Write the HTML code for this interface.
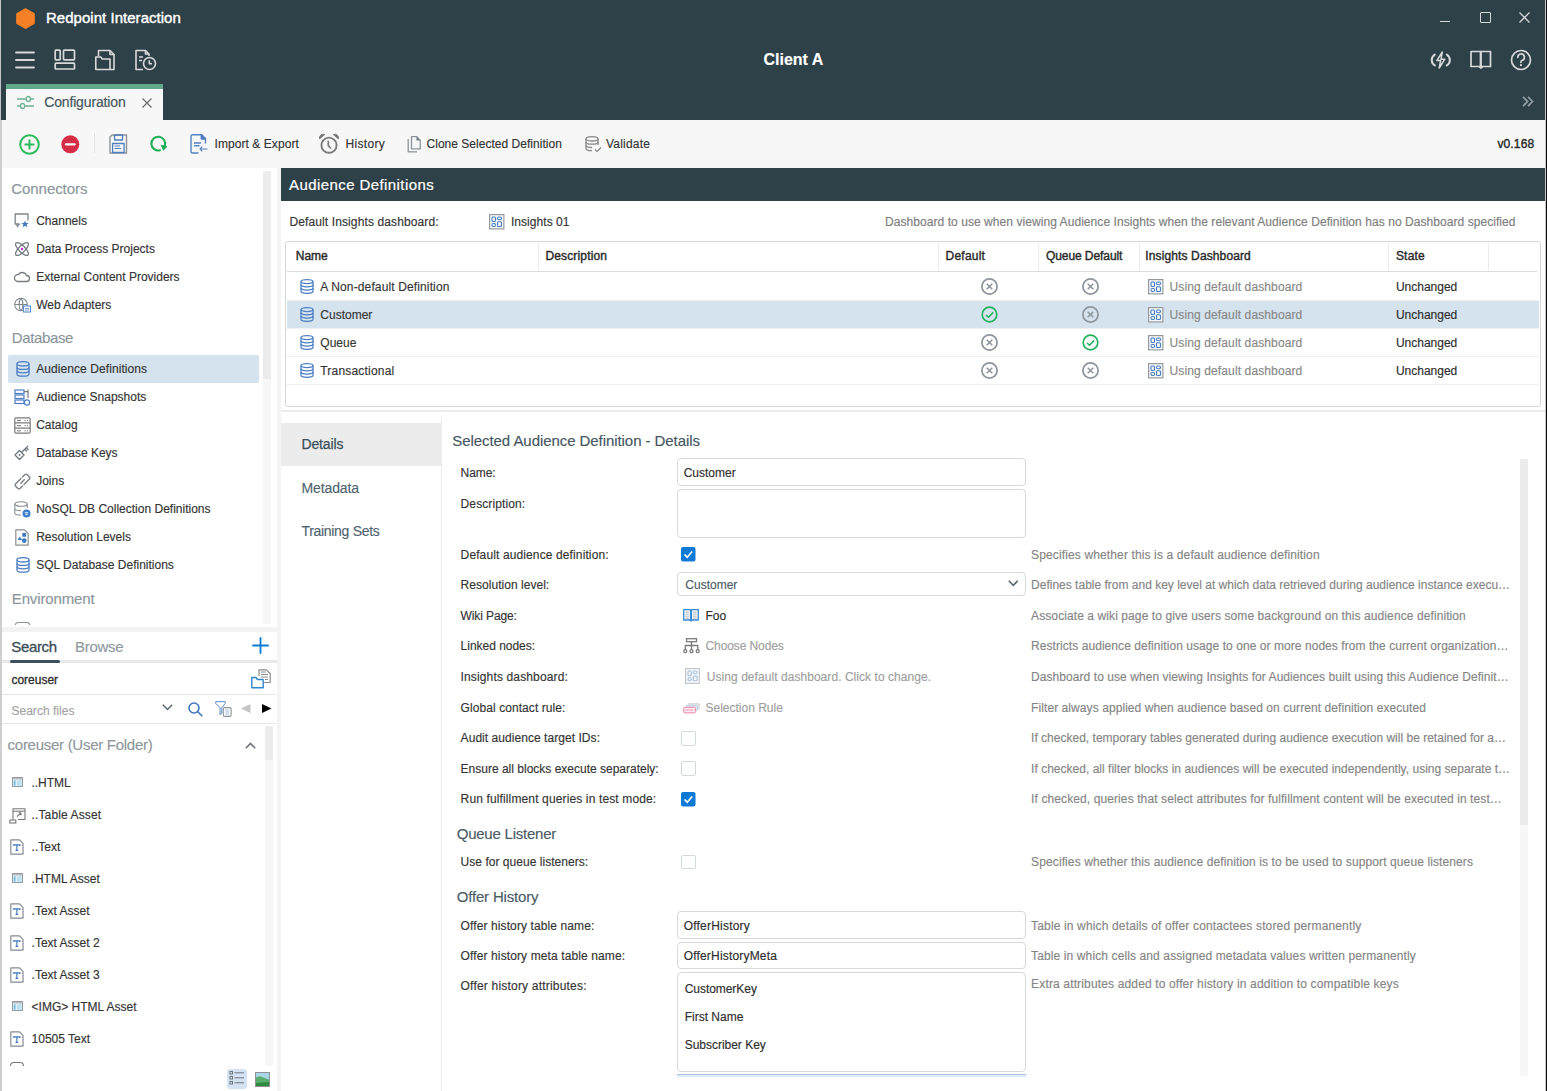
<!DOCTYPE html>
<html><head><meta charset="utf-8">
<style>
*{box-sizing:border-box;margin:0;padding:0}
html,body{width:1547px;height:1091px;overflow:hidden;background:#fff;font-family:"Liberation Sans",sans-serif;font-size:12px;color:#343434}
.a{position:absolute}
.t{position:absolute;white-space:nowrap;line-height:1;-webkit-text-stroke:0.15px currentColor}
svg{position:absolute;overflow:visible}
#frameL{left:0;top:0;width:1px;height:120px;background:#c4c7c8}
#hdr{left:1px;top:0;width:1544px;height:120px;background:#2e4048}
#frameR{left:1545px;top:0;width:1px;height:1091px;background:#c7c7c7}
#frameR2{left:1546px;top:0;width:1px;height:1091px;background:#0a0a0a}
#frameL2{left:0;top:120px;width:2px;height:971px;background:#cfcfcf}
.w{color:#fff}
.ic{fill:none;stroke:#d7d9da;stroke-width:1.6}
</style></head><body>
<div id="hdr" class="a"></div>
<div id="frameL" class="a"></div>
<div id="frameL2" class="a"></div>
<div id="frameR" class="a"></div>
<div id="frameR2" class="a"></div>

<!-- title bar -->
<svg style="left:15.8px;top:8px" width="19" height="21.2" viewBox="0 0 19 21.2"><path d="M9.5 0.6 L18.3 5.6 L18.3 15.6 L9.5 20.6 L0.7 15.6 L0.7 5.6 Z" fill="#f58025" stroke="#f58025" stroke-width="1" stroke-linejoin="round"/></svg>
<div class="t w" style="left:46px;top:9.8px;font-size:15px;letter-spacing:0.03px;-webkit-text-stroke:0.4px #fff">Redpoint Interaction</div>
<!-- window controls -->
<div class="a" style="left:1440px;top:21px;width:10px;height:1.3px;background:#d5d8d9"></div>
<div class="a" style="left:1480px;top:12px;width:10.5px;height:10.5px;border:1.3px solid #d5d8d9;border-radius:1px"></div>
<svg style="left:1519px;top:12px" width="11" height="11" viewBox="0 0 11 11"><path d="M0.5 0.5 L10.5 10.5 M10.5 0.5 L0.5 10.5" stroke="#d5d8d9" stroke-width="1.3"/></svg>

<!-- nav row -->
<svg style="left:15px;top:50px" width="20" height="20" viewBox="0 0 20 20"><path d="M1 2.5H19M1 10H19M1 17.5H19" stroke="#d7d9da" stroke-width="1.8" stroke-linecap="round"/></svg>
<svg style="left:54px;top:49px" width="22" height="22" viewBox="0 0 22 22"><g fill="none" stroke="#d7d9da" stroke-width="1.7"><rect x="1.2" y="1.2" width="5" height="9.6" rx="0.8"/><rect x="9.5" y="1.2" width="11" height="9.6" rx="0.8"/><rect x="1.2" y="14.2" width="19.3" height="5.8" rx="0.8"/></g></svg>
<svg style="left:95px;top:49px" width="21" height="22" viewBox="0 0 21 22"><g fill="none" stroke="#d7d9da" stroke-width="1.6" stroke-linejoin="round"><path d="M3.5 7V1.5H15L19 5.5V20.5H15"/><path d="M15 1.5V5.5H19"/><path d="M0.8 8H6L7 10H15V20.5H0.8Z"/></g></svg>
<svg style="left:135px;top:49px" width="22" height="22" viewBox="0 0 22 22"><g fill="none" stroke="#d7d9da" stroke-width="1.6" stroke-linejoin="round"><path d="M8 20.5H1V1.5H10.5L14 5V7"/><path d="M10.5 1.5V5H14" /><path d="M4 8H8M4 11.5H7"/><circle cx="14.5" cy="14.5" r="6"/><path d="M14.3 11.2V14.8H17"/></g></svg>
<div class="t w" style="left:763.5px;top:51.7px;font-size:16px;font-weight:700">Client A</div>
<!-- right icons -->
<svg style="left:1430px;top:51px" width="22" height="18" viewBox="0 0 22 18"><g fill="none" stroke="#d7d9da" stroke-linecap="round" stroke-linejoin="round"><path d="M4.8 3.6A6.3 6.3 0 0 0 4.8 14.4" stroke-width="2"/><path d="M16.8 3.6A6.3 6.3 0 0 1 16.8 14.4" stroke-width="2"/><path d="M12.3 1L6.8 9.6H10.6L9.2 17L14.8 8.2H11Z" stroke-width="1.5"/></g></svg>
<svg style="left:1470px;top:50px" width="22" height="19" viewBox="0 0 22 19"><g fill="none" stroke="#d7d9da" stroke-width="1.7" stroke-linejoin="round"><path d="M1 1.5H10.5V16.5H1Z"/><path d="M11 1.5H20.5V16.5H11Z"/><path d="M9.5 16.8L11 18L12.5 16.8" /></g></svg>
<svg style="left:1510px;top:49px" width="22" height="22" viewBox="0 0 22 22"><g fill="none" stroke="#d7d9da" stroke-width="1.7"><circle cx="11" cy="11" r="9.5"/><path d="M7.8 8.3A3.3 3.3 0 1 1 11.8 11.5C11 11.8 10.9 12.3 10.9 13.3" stroke-linecap="round"/></g><circle cx="10.9" cy="16.2" r="1.1" fill="#d7d9da"/></svg>

<!-- tab bar -->
<div class="a" style="left:6px;top:84px;width:157px;height:36px;background:#f7f7f7;border-top:5px solid #60a888"></div>
<svg style="left:17px;top:95px" width="17" height="15" viewBox="0 0 17 15"><g fill="none" stroke="#6db394" stroke-width="1.4"><path d="M0 4H9M13.5 4H17M0 11H3.5M8 11H17"/><rect x="9.3" y="1.5" width="4" height="5" rx="2"/><rect x="3.6" y="8.5" width="4" height="5" rx="2"/></g></svg>
<div class="t" style="left:44.2px;top:95px;font-size:14px;color:#465860;letter-spacing:-0.15px;-webkit-text-stroke:0.2px #465860">Configuration</div>
<svg style="left:142px;top:98px" width="10" height="10" viewBox="0 0 10 10"><path d="M0.5 0.5L9.5 9.5M9.5 0.5L0.5 9.5" stroke="#6d6d6d" stroke-width="1.2"/></svg>
<svg style="left:1522px;top:96px" width="12" height="11" viewBox="0 0 12 11"><path d="M1 0.8L5.5 5.5L1 10.2M6 0.8L10.5 5.5L6 10.2" fill="none" stroke="#929ea4" stroke-width="1.7"/></svg>

<!-- toolbar -->
<div class="a" style="left:2px;top:120px;width:1543px;height:47.5px;background:#f7f7f7"></div>
<svg style="left:19px;top:133.5px" width="21" height="21" viewBox="0 0 21 21"><g fill="none" stroke="#2dbb5d" stroke-width="2"><circle cx="10.5" cy="10.5" r="9.3"/><path d="M10.5 5.5V15.5M5.5 10.5H15.5"/></g></svg>
<svg style="left:60.5px;top:134.5px" width="19" height="19" viewBox="0 0 19 19"><circle cx="9.3" cy="9.3" r="9" fill="#d52d45"/><path d="M5 9.3H13.6" stroke="#fff" stroke-width="2.3" stroke-linecap="round"/></svg>
<div class="a" style="left:94px;top:133px;width:1px;height:20px;background:#e3e3e3"></div>
<svg style="left:109px;top:133.5px" width="19" height="20" viewBox="0 0 19 20"><g fill="none" stroke-linejoin="round"><path d="M3 1H17.5V19H1V3Z" stroke="#8f9396" stroke-width="1.4"/><rect x="5.5" y="1" width="8" height="5" stroke="#4e7fc0" stroke-width="1.3"/><rect x="3.6" y="9.5" width="11.5" height="9" stroke="#4e7fc0" stroke-width="1.3"/><path d="M5.5 12H11M5.5 14.5H12" stroke="#4e7fc0" stroke-width="1"/></g></svg>
<svg style="left:150px;top:135px" width="18" height="18" viewBox="0 0 18 18"><path d="M10 15.3A6.9 6.9 0 1 1 14.8 10.8" fill="none" stroke="#1fae55" stroke-width="2.1" stroke-linecap="round"/><path d="M11.2 10.2L17 11.6L13.4 15.2Z" fill="#1fae55" stroke="#1fae55" stroke-width="0.8" stroke-linejoin="round"/></svg>
<svg style="left:189.5px;top:133.5px" width="18" height="20" viewBox="0 0 18 20"><g fill="none" stroke="#5583c3" stroke-width="1.4" stroke-linejoin="round"><path d="M15.5 9.5V4.5L11.8 0.8H2.8Q1 0.8 1 2.6V17.2Q1 19 2.8 19H8.5"/><path d="M4 9H11M4 11.8H9.5"/><path d="M17.5 15H10M12.3 12.7L10 15L12.3 17.3" stroke-width="1.1"/></g><path d="M11 0.8V5.3H15.5Z" fill="#4a7bc0" stroke="#4a7bc0" stroke-width="0.8" stroke-linejoin="round"/></svg>
<div class="t" style="left:214.6px;top:138.1px;letter-spacing:0.059px">Import &amp; Export</div>
<svg style="left:319px;top:133.5px" width="21" height="20" viewBox="0 0 21 20"><g fill="none" stroke="#7a7a7a" stroke-width="1.9"><circle cx="10" cy="11.2" r="7.6"/><path d="M9.3 6.8V11.6L12 14.5" stroke-width="1.7"/></g><path d="M0.6 4.8A3.6 3.6 0 0 1 5.6 0.6L3.2 2.8Z M19.4 4.8A3.6 3.6 0 0 0 14.4 0.6L16.8 2.8Z" fill="#7a7a7a" stroke="#7a7a7a" stroke-width="1"/></svg>
<div class="t" style="left:345.5px;top:138.1px;letter-spacing:0.326px">History</div>
<svg style="left:407px;top:135.5px" width="14" height="17" viewBox="0 0 14 17"><g fill="none" stroke="#8a949a" stroke-width="1.3" stroke-linejoin="round"><path d="M4.5 0.7H9.8L13.2 4.1V12.8H4.5Z"/><path d="M1.2 3V15.8H10"/></g><path d="M9.5 0.7V4.4H13.2Z" fill="#6c7a82"/></svg>
<div class="t" style="left:426.5px;top:138.1px;letter-spacing:0.023px">Clone Selected Definition</div>
<svg style="left:584.5px;top:135.5px" width="17" height="17" viewBox="0 0 17 17"><g fill="none" stroke="#888" stroke-width="1.3"><ellipse cx="7" cy="2.8" rx="6" ry="2.2"/><path d="M1 2.8V12.5C1 13.7 3.7 14.7 7 14.7M13 2.8V9"/><path d="M1 6C1 7.2 3.7 8.2 7 8.2S13 7.2 13 6M1 9.3C1 10.5 3.7 11.5 7 11.5"/><path d="M10 13.5L12 15.5L16 11.5" stroke-width="1.2"/></g></svg>
<div class="t" style="left:605.9px;top:138.1px;letter-spacing:0.231px">Validate</div>
<div class="t" style="left:1497.4px;top:138.2px;color:#2a2a2a;-webkit-text-stroke:0.4px #2a2a2a;letter-spacing:0.154px">v0.168</div>


<!-- LEFT PANEL -->
<div class="a" style="left:2px;top:167.5px;width:275px;height:924px;background:#fff"></div>
<div class="a" style="left:277px;top:167.5px;width:4px;height:924px;background:#f4f4f4"></div>
<!-- nav scrollbar -->
<div class="a" style="left:263px;top:171px;width:8px;height:452.5px;background:#f7f7f7"></div>
<div class="a" style="left:263px;top:171px;width:8px;height:208px;background:#ececec"></div>
<div class="t" style="left:11.3px;top:181.4px;font-size:15px;color:#8b969c;letter-spacing:-0.069px">Connectors</div>
<div class="t" style="left:11.8px;top:330.2px;font-size:15px;color:#8b969c;letter-spacing:-0.374px">Database</div>
<div class="t" style="left:11.8px;top:591px;font-size:15px;color:#8b969c;letter-spacing:-0.142px">Environment</div>
<div class="a" style="left:8px;top:355px;width:250.5px;height:28px;background:#d5e3ee;border-radius:2px"></div>
<svg style="left:14px;top:213px" width="16" height="15" viewBox="0 0 16 15"><path d="M5.5 11H1.2V1H14V7.5" fill="none" stroke="#7c868c" stroke-width="1.3" stroke-linejoin="round"/><path d="M2.5 11L3.5 13.5L5.5 11" fill="none" stroke="#7c868c" stroke-width="1.2"/><path d="M11 7.5L12 10H14.8L12.6 11.6L13.4 14.3L11 12.7L8.6 14.3L9.4 11.6L7.2 10H10Z" fill="#3f78c0"/></svg>
<div class="t" style="left:36.2px;top:214.84px">Channels</div>
<svg style="left:14px;top:241px" width="16" height="16" viewBox="0 0 16 16"><g fill="none" stroke="#737d83" stroke-width="1.3"><ellipse cx="8" cy="8" rx="8.5" ry="3.2" transform="rotate(45 8 8)"/><ellipse cx="8" cy="8" rx="8.5" ry="3.2" transform="rotate(-45 8 8)"/></g><circle cx="8" cy="8" r="1.2" fill="#c020c0"/></svg>
<div class="t" style="left:36.2px;top:242.84px">Data Process Projects</div>
<svg style="left:14px;top:271px" width="16" height="12" viewBox="0 0 16 12"><path d="M3.5 10.5H12.5A3 3 0 0 0 12.5 4.5A4.5 4.5 0 0 0 4.5 3.5A3.5 3.5 0 0 0 3.5 10.5Z" fill="none" stroke="#737d83" stroke-width="1.3"/></svg>
<div class="t" style="left:36.2px;top:270.84px">External Content Providers</div>
<svg style="left:14px;top:297px" width="17" height="16" viewBox="0 0 17 16"><g fill="none" stroke="#7c868c" stroke-width="1.1"><circle cx="7" cy="7.5" r="6.3"/><path d="M0.7 7.5H13.3M7 1.2C4.5 4 4.5 11 7 13.8M7 1.2C9.5 4 9.5 11 7 13.8"/></g><rect x="9.5" y="9" width="7" height="6" fill="#fff" stroke="#5a8ccc" stroke-width="1.1"/><path d="M11 11.5H15M11 13H15" stroke="#5a8ccc" stroke-width="0.8"/></svg>
<div class="t" style="left:36.2px;top:298.84px">Web Adapters</div>
<svg style="left:15.5px;top:361px" width="14" height="16" viewBox="0 0 14 16"><g fill="none" stroke="#4a7fc4" stroke-width="1.3"><ellipse cx="7" cy="2.8" rx="6" ry="2.2"/><path d="M1 2.8V13C1 14.2 3.7 15.2 7 15.2S13 14.2 13 13V2.8"/><path d="M1 6.2C1 7.4 3.7 8.4 7 8.4S13 7.4 13 6.2M1 9.6C1 10.8 3.7 11.8 7 11.8S13 10.8 13 9.6"/></g></svg>
<div class="t" style="left:36.2px;top:362.84px;letter-spacing:0.08px">Audience Definitions</div>
<svg style="left:14px;top:388.5px" width="16" height="17" viewBox="0 0 16 17"><g fill="none" stroke-width="1.2"><rect x="1" y="1" width="9" height="3.5" stroke="#4a7fc4"/><rect x="1" y="6" width="9" height="3.5" stroke="#4a7fc4"/><rect x="1" y="11" width="9" height="3.5" stroke="#4a7fc4"/><path d="M10 2.7H14M14 0.5V9" stroke="#777"/><circle cx="13" cy="13.5" r="2.6" stroke="#4a7fc4" fill="#fff"/></g></svg>
<div class="t" style="left:36.2px;top:390.84px">Audience Snapshots</div>
<svg style="left:13.5px;top:416.5px" width="17" height="17" viewBox="0 0 17 17"><g fill="none" stroke="#7a7a7a" stroke-width="1.2"><rect x="0.8" y="0.8" width="15.4" height="15.4" rx="1.2"/><path d="M0.8 5.9H16.2M0.8 11.1H16.2"/></g><g fill="#8a8a8a"><rect x="3" y="2.8" width="4" height="1.2"/><rect x="3" y="8" width="4" height="1.2"/><rect x="3" y="13.2" width="4" height="1.2"/><rect x="10.5" y="2.8" width="1.2" height="1.2"/><rect x="12.8" y="2.8" width="1.2" height="1.2"/><rect x="10.5" y="8" width="1.2" height="1.2"/><rect x="12.8" y="8" width="1.2" height="1.2"/><rect x="10.5" y="13.2" width="1.2" height="1.2"/><rect x="12.8" y="13.2" width="1.2" height="1.2"/></g></svg>
<div class="t" style="left:36.2px;top:418.84px">Catalog</div>
<svg style="left:14px;top:445px" width="16" height="16" viewBox="0 0 16 16"><g fill="none" stroke="#6f7a80" stroke-width="1.4" stroke-linejoin="round"><path d="M1 10L5.5 5.5L10 10L5.5 14.5Z"/><path d="M7.5 7.5L14 1M11 4.5L13 6.5M12.5 3L14.5 5"/></g><circle cx="5.5" cy="10" r="1" fill="#6f7a80"/></svg>
<div class="t" style="left:36.2px;top:446.84px">Database Keys</div>
<svg style="left:13.5px;top:472.5px" width="17" height="17" viewBox="0 0 17 17"><g fill="none" stroke="#7d858a" stroke-width="1.5" stroke-linecap="round" stroke-linejoin="round"><path d="M8.5 4L11 1.5Q12 0.8 13 1.5L15.5 4Q16.2 5 15.5 6L10 11.5"/><path d="M8.5 13L6 15.5Q5 16.2 4 15.5L1.5 13Q0.8 12 1.5 11L7 5.5"/><path d="M6.8 10.2L10.2 6.8"/></g></svg>
<div class="t" style="left:36.2px;top:474.84px">Joins</div>
<svg style="left:14px;top:500.5px" width="17" height="17" viewBox="0 0 17 17"><g fill="none" stroke="#8a8f93" stroke-width="1.1"><ellipse cx="7" cy="3" rx="6.2" ry="2.3"/><path d="M0.8 3V12C0.8 13.2 3.5 14.2 7 14.2M13.2 3V7M0.8 7.5C0.8 8.7 3.5 9.7 7 9.7"/></g><circle cx="12.5" cy="12.5" r="4" fill="#3b7fd0"/><path d="M10.8 11.8H14.2M11.5 13.5H13.5" stroke="#fff" stroke-width="1"/></svg>
<div class="t" style="left:36.2px;top:502.84px">NoSQL DB Collection Definitions</div>
<svg style="left:15px;top:528.5px" width="14" height="17" viewBox="0 0 14 17"><path d="M0.8 0.8H9.5L13.2 4.5V16.2H0.8Z" fill="none" stroke="#8a9095" stroke-width="1.2" stroke-linejoin="round"/><path d="M2.5 11L4.8 7.4L7.1 11Z" fill="#3f78c0"/><rect x="7.3" y="4" width="3.8" height="3.8" rx="0.5" fill="#3f78c0"/><circle cx="9.2" cy="11.6" r="2.4" fill="#3f78c0"/></svg>
<div class="t" style="left:36.2px;top:530.84px">Resolution Levels</div>
<svg style="left:15.5px;top:557px" width="14" height="16" viewBox="0 0 14 16"><g fill="none" stroke="#4a7fc4" stroke-width="1.3"><ellipse cx="7" cy="2.8" rx="6" ry="2.2"/><path d="M1 2.8V13C1 14.2 3.7 15.2 7 15.2S13 14.2 13 13V2.8"/><path d="M1 6.2C1 7.4 3.7 8.4 7 8.4S13 7.4 13 6.2M1 9.6C1 10.8 3.7 11.8 7 11.8S13 10.8 13 9.6"/></g></svg>
<div class="t" style="left:36.2px;top:558.84px">SQL Database Definitions</div>

<!-- partial icon -->
<div class="a" style="left:14.5px;top:622.2px;width:15px;height:3px;border:1.2px solid #8a9398;border-bottom:none;border-radius:3px 3px 0 0"></div>
<!-- separator -->
<div class="a" style="left:2px;top:627px;width:275px;height:5px;background:#f3f3f3"></div>
<div class="t" style="left:11.3px;top:638.7px;font-size:15px;color:#3a4d58;-webkit-text-stroke:0.3px #3a4d58;letter-spacing:-0.346px">Search</div>
<div class="t" style="left:75px;top:638.7px;font-size:15px;color:#8e99a0;letter-spacing:-0.306px">Browse</div>
<svg style="left:252px;top:636.5px" width="17" height="17" viewBox="0 0 17 17"><path d="M8.5 1V16M1 8.5H16" stroke="#0b7bd5" stroke-width="1.8" stroke-linecap="round"/></svg>
<div class="a" style="left:2px;top:660px;width:275px;height:3px;background:#e8e8e8"></div>
<div class="a" style="left:10px;top:660px;width:50px;height:3px;background:#3b4f5c;border-radius:1.5px"></div>
<div class="t" style="left:11.4px;top:673.5px;color:#2d2d2d;-webkit-text-stroke:0.3px #2d2d2d;letter-spacing:0.002px">coreuser</div>
<svg style="left:250.5px;top:669px" width="20" height="20" viewBox="0 0 20 20"><g fill="none" stroke-linejoin="round"><path d="M8 7V0.8H15.5L19.2 4.5V13.5H13" stroke="#8c8c8c" stroke-width="1.2"/><path d="M10 3H15M10 5.5H17M10 8H17M14 10.5H17" stroke="#8c8c8c" stroke-width="1"/><path d="M0.8 8.5H5L6.5 10.5H12.2V18.8H0.8Z" stroke="#2f86cf" stroke-width="1.4"/></g></svg>
<div class="a" style="left:2px;top:694px;width:274px;height:1px;background:#e6e6e6"></div>
<div class="t" style="left:11.4px;top:704.5px;color:#a3a3a3;letter-spacing:0.036px">Search files</div>
<svg style="left:162px;top:704px" width="11" height="7" viewBox="0 0 11 7"><path d="M0.8 0.8L5.5 5.5L10.2 0.8" fill="none" stroke="#5a6a72" stroke-width="1.5"/></svg>
<svg style="left:187.5px;top:701.5px" width="15" height="15" viewBox="0 0 15 15"><g fill="none" stroke="#3f78be" stroke-width="1.6"><circle cx="6" cy="6" r="5"/><path d="M9.5 9.5L14.3 14.3"/></g></svg>
<svg style="left:214.5px;top:701px" width="17" height="16" viewBox="0 0 17 16"><path d="M0.7 0.7H10.3V2.3L6.8 6.8V12.2L5 13.8V6.8L0.7 2.3Z" fill="none" stroke="#5b8cc8" stroke-width="1" stroke-linejoin="round"/><rect x="8.3" y="6.6" width="7.8" height="8.8" rx="1.2" fill="#fff" stroke="#8c959b" stroke-width="1.1"/><path d="M10.2 9H14.2M10.2 11H14.2M10.2 13H14.2" stroke="#7ea3d3" stroke-width="0.7"/></svg>
<svg style="left:241px;top:704px" width="10" height="9" viewBox="0 0 10 9"><path d="M9.5 0V9L0 4.5Z" fill="#c4c4c4"/></svg>
<svg style="left:261.5px;top:704px" width="10" height="9" viewBox="0 0 10 9"><path d="M0 0V9L9.5 4.5Z" fill="#000"/></svg>
<div class="a" style="left:2px;top:723px;width:274px;height:1px;background:#e6e6e6"></div>
<!-- folder scrollbar -->
<div class="a" style="left:265px;top:726px;width:8px;height:340px;background:#f7f7f7"></div>
<div class="a" style="left:265px;top:726px;width:8px;height:34px;background:#ececec"></div>
<div class="t" style="left:7.6px;top:737.3px;font-size:15px;color:#8e979c;letter-spacing:-0.275px">coreuser (User Folder)</div>
<svg style="left:245px;top:742px" width="11" height="7" viewBox="0 0 11 7"><path d="M0.8 6.2L5.5 1.5L10.2 6.2" fill="none" stroke="#6d767b" stroke-width="1.6"/></svg>
<svg style="left:12px;top:777px" width="11" height="10" viewBox="0 0 11 10"><rect x="0.5" y="0.5" width="10" height="9" fill="#fff" stroke="#979da1" stroke-width="1"/><rect x="1" y="1" width="9" height="1.5" fill="#b3b8bc"/><rect x="1.6" y="3.3" width="2" height="5.4" fill="#6fbbe6"/><path d="M4.6 4H9.8M4.6 6H9.8M4.6 8H9.8" stroke="#6fbbe6" stroke-width="0.9"/></svg>
<div class="t" style="left:31.6px;top:776.84px;letter-spacing:-0.069px">..HTML</div>
<svg style="left:9px;top:808px" width="17" height="16" viewBox="0 0 17 16"><g fill="none" stroke="#7a7a7a" stroke-width="1.1"><path d="M4 11.5V0.8H16V11.5H9"/><path d="M4 3.2H16"/><path d="M8 8.5L12 4.8M12 4.8H9.5M12 4.8V7.2"/><rect x="0.8" y="12" width="6" height="3"/></g></svg>
<div class="t" style="left:31.6px;top:808.84px;letter-spacing:0.121px">..Table Asset</div>
<svg style="left:10px;top:839px" width="14" height="16" viewBox="0 0 14 16"><path d="M0.8 0.8H9.5L13 4.3V15.2H0.8Z" fill="none" stroke="#868c91" stroke-width="1.2" stroke-linejoin="round"/><path d="M3.8 7V5.8H9.9V7M6.85 5.8V11.3M5.5 11.3H8.2" fill="none" stroke="#3f78c0" stroke-width="1.15"/></svg>
<div class="t" style="left:31.6px;top:840.84px">..Text</div>
<svg style="left:12px;top:873px" width="11" height="10" viewBox="0 0 11 10"><rect x="0.5" y="0.5" width="10" height="9" fill="#fff" stroke="#979da1" stroke-width="1"/><rect x="1" y="1" width="9" height="1.5" fill="#b3b8bc"/><rect x="1.6" y="3.3" width="2" height="5.4" fill="#6fbbe6"/><path d="M4.6 4H9.8M4.6 6H9.8M4.6 8H9.8" stroke="#6fbbe6" stroke-width="0.9"/></svg>
<div class="t" style="left:31.6px;top:872.84px">.HTML Asset</div>
<svg style="left:10px;top:903px" width="14" height="16" viewBox="0 0 14 16"><path d="M0.8 0.8H9.5L13 4.3V15.2H0.8Z" fill="none" stroke="#868c91" stroke-width="1.2" stroke-linejoin="round"/><path d="M3.8 7V5.8H9.9V7M6.85 5.8V11.3M5.5 11.3H8.2" fill="none" stroke="#3f78c0" stroke-width="1.15"/></svg>
<div class="t" style="left:31.6px;top:904.84px">.Text Asset</div>
<svg style="left:10px;top:935px" width="14" height="16" viewBox="0 0 14 16"><path d="M0.8 0.8H9.5L13 4.3V15.2H0.8Z" fill="none" stroke="#868c91" stroke-width="1.2" stroke-linejoin="round"/><path d="M3.8 7V5.8H9.9V7M6.85 5.8V11.3M5.5 11.3H8.2" fill="none" stroke="#3f78c0" stroke-width="1.15"/></svg>
<div class="t" style="left:31.6px;top:936.84px">.Text Asset 2</div>
<svg style="left:10px;top:967px" width="14" height="16" viewBox="0 0 14 16"><path d="M0.8 0.8H9.5L13 4.3V15.2H0.8Z" fill="none" stroke="#868c91" stroke-width="1.2" stroke-linejoin="round"/><path d="M3.8 7V5.8H9.9V7M6.85 5.8V11.3M5.5 11.3H8.2" fill="none" stroke="#3f78c0" stroke-width="1.15"/></svg>
<div class="t" style="left:31.6px;top:968.84px">.Text Asset 3</div>
<svg style="left:12px;top:1001px" width="11" height="10" viewBox="0 0 11 10"><rect x="0.5" y="0.5" width="10" height="9" fill="#fff" stroke="#979da1" stroke-width="1"/><rect x="1" y="1" width="9" height="1.5" fill="#b3b8bc"/><rect x="1.6" y="3.3" width="2" height="5.4" fill="#6fbbe6"/><path d="M4.6 4H9.8M4.6 6H9.8M4.6 8H9.8" stroke="#6fbbe6" stroke-width="0.9"/></svg>
<div class="t" style="left:31.6px;top:1000.84px">&lt;IMG&gt; HTML Asset</div>
<svg style="left:10px;top:1031px" width="14" height="16" viewBox="0 0 14 16"><path d="M0.8 0.8H9.5L13 4.3V15.2H0.8Z" fill="none" stroke="#868c91" stroke-width="1.2" stroke-linejoin="round"/><path d="M3.8 7V5.8H9.9V7M6.85 5.8V11.3M5.5 11.3H8.2" fill="none" stroke="#3f78c0" stroke-width="1.15"/></svg>
<div class="t" style="left:31.6px;top:1032.84px">10505 Text</div>

<!-- bottom partial icon -->
<div class="a" style="left:9.5px;top:1062px;width:14px;height:4px;border:1.2px solid #777;border-bottom:none;border-radius:7px 7px 0 0"></div>
<div class="a" style="left:2px;top:1065.5px;width:263px;height:26px;background:#fff"></div>
<div class="a" style="left:227px;top:1069px;width:20px;height:20px;background:#d3e3f3;border-radius:3px"></div>
<svg style="left:229px;top:1070px" width="16" height="16" viewBox="0 0 16 16"><g fill="none" stroke="#6e7478" stroke-width="1"><rect x="1" y="1.5" width="2.5" height="2.5"/><rect x="1" y="6.5" width="2.5" height="2.5"/><rect x="1" y="11.5" width="2.5" height="2.5"/><path d="M5.5 2.8H15M5.5 7.8H15M5.5 12.8H15"/></g></svg>
<svg style="left:255px;top:1071.5px" width="15" height="15" viewBox="0 0 15 15"><rect x="0.5" y="0.5" width="14" height="14" fill="#a9d6e6" stroke="#8e9296" stroke-width="1"/><path d="M1 14V5.5C3.5 4 6 4.2 8.5 5.5S12.5 7.5 14 7.5V14Z" fill="#5aae6c"/><path d="M1 14V11C5 10.5 10 10.5 14 10V14Z" fill="#2f8b3c"/></svg>


<!-- MAIN PANEL -->
<div class="a" style="left:281px;top:167.8px;width:1264px;height:33.3px;background:#2e4048"></div>
<div class="t w" style="left:289.1px;top:177.3px;font-size:15px;letter-spacing:0.412px;-webkit-text-stroke:0.2px #fff">Audience Definitions</div>
<div class="t" style="left:289.4px;top:216px;letter-spacing:0.119px">Default Insights dashboard:</div>
<svg style="left:489px;top:214px" width="15.5" height="15.5" viewBox="0 0 15.5 15.5"><rect x="0.6" y="0.6" width="14.3" height="14.3" fill="#f3f6f9" stroke="#8e959a" stroke-width="1.1"/><g fill="none" stroke="#4a7fc4" stroke-width="1.1"><rect x="3" y="3" width="3.5" height="4.5" rx="1"/><rect x="8.5" y="3" width="4" height="2.8" rx="1.2"/><rect x="3" y="9.5" width="3.5" height="3" rx="1.2"/><rect x="8.5" y="7.8" width="4" height="4.7" rx="1"/></g></svg>
<div class="t" style="left:510.9px;top:216px;letter-spacing:0.055px">Insights 01</div>
<div class="t" style="left:885px;top:216px;color:#7e7e7e;letter-spacing:0.061px">Dashboard to use when viewing Audience Insights when the relevant Audience Definition has no Dashboard specified</div>

<!-- table -->
<div class="a" style="left:285px;top:241px;width:1255.5px;height:166px;border:1px solid #d6d6d6;border-radius:3px"></div>
<div class="a" style="left:287px;top:270.7px;width:1250px;height:1.6px;background:#dcdcdc"></div>
<div class="a" style="left:538px;top:243px;width:1px;height:28px;background:#ececec"></div>
<div class="a" style="left:938px;top:243px;width:1px;height:28px;background:#ececec"></div>
<div class="a" style="left:1038px;top:243px;width:1px;height:28px;background:#ececec"></div>
<div class="a" style="left:1139px;top:243px;width:1px;height:28px;background:#ececec"></div>
<div class="a" style="left:1387.5px;top:243px;width:1px;height:28px;background:#ececec"></div>
<div class="a" style="left:1488px;top:243px;width:1px;height:28px;background:#ececec"></div>
<div class="t" style="left:295.8px;top:250.4px;color:#2a2a2a;-webkit-text-stroke:0.4px #2a2a2a;letter-spacing:-0.072px">Name</div>
<div class="t" style="left:545.4px;top:250.4px;color:#2a2a2a;-webkit-text-stroke:0.4px #2a2a2a;letter-spacing:0.157px">Description</div>
<div class="t" style="left:945.6px;top:250.4px;color:#2a2a2a;-webkit-text-stroke:0.4px #2a2a2a;letter-spacing:0.211px">Default</div>
<div class="t" style="left:1046px;top:250.4px;color:#2a2a2a;-webkit-text-stroke:0.4px #2a2a2a;letter-spacing:-0.083px">Queue Default</div>
<div class="t" style="left:1145.3px;top:250.4px;color:#2a2a2a;-webkit-text-stroke:0.4px #2a2a2a;letter-spacing:0.123px">Insights Dashboard</div>
<div class="t" style="left:1395.9px;top:250.4px;color:#2a2a2a;-webkit-text-stroke:0.4px #2a2a2a;letter-spacing:0.217px">State</div>
<div class="a" style="left:287px;top:299.6px;width:1252px;height:28.2px;background:#d5e3ee"></div>
<svg style="left:299.5px;top:278.5px" width="14" height="15" viewBox="0 0 14 15"><g fill="none" stroke="#4a7fc4" stroke-width="1.25"><ellipse cx="7" cy="2.6" rx="6" ry="2"/><path d="M1 2.6V12.3C1 13.4 3.7 14.3 7 14.3S13 13.4 13 12.3V2.6"/><path d="M1 5.8C1 6.9 3.7 7.8 7 7.8S13 6.9 13 5.8M1 9C1 10.1 3.7 11 7 11S13 10.1 13 9"/></g></svg>
<div class="t" style="left:320.3px;top:280.64px;letter-spacing:0.131px">A Non-default Definition</div>
<svg style="left:981px;top:277.5px" width="17" height="17" viewBox="0 0 17 17"><circle cx="8.5" cy="8.5" r="7.6" fill="none" stroke="#8e979d" stroke-width="1.75"/><path d="M5.7 5.7L11.3 11.3M11.3 5.7L5.7 11.3" stroke="#8e979d" stroke-width="1.6"/></svg>
<svg style="left:1081.8px;top:277.5px" width="17" height="17" viewBox="0 0 17 17"><circle cx="8.5" cy="8.5" r="7.6" fill="none" stroke="#8e979d" stroke-width="1.75"/><path d="M5.7 5.7L11.3 11.3M11.3 5.7L5.7 11.3" stroke="#8e979d" stroke-width="1.6"/></svg>
<svg style="left:1148px;top:278.5px" width="15.5" height="15.5" viewBox="0 0 15.5 15.5"><rect x="0.6" y="0.6" width="14.3" height="14.3" fill="#f3f6f9" stroke="#8e959a" stroke-width="1.1"/><g fill="none" stroke="#4a7fc4" stroke-width="1.1"><rect x="3" y="3" width="3.5" height="4.5" rx="1"/><rect x="8.5" y="3" width="4" height="2.8" rx="1.2"/><rect x="3" y="9.5" width="3.5" height="3" rx="1.2"/><rect x="8.5" y="7.8" width="4" height="4.7" rx="1"/></g></svg>
<div class="t" style="left:1169.5px;top:280.64px;color:#888;letter-spacing:0.123px">Using default dashboard</div>
<div class="t" style="left:1395.9px;top:280.64px;color:#2d2d2d">Unchanged</div>
<div class="a" style="left:287px;top:299.5px;width:1252px;height:1px;background:#f0f0f0"></div>
<svg style="left:299.5px;top:306.5px" width="14" height="15" viewBox="0 0 14 15"><g fill="none" stroke="#4a7fc4" stroke-width="1.25"><ellipse cx="7" cy="2.6" rx="6" ry="2"/><path d="M1 2.6V12.3C1 13.4 3.7 14.3 7 14.3S13 13.4 13 12.3V2.6"/><path d="M1 5.8C1 6.9 3.7 7.8 7 7.8S13 6.9 13 5.8M1 9C1 10.1 3.7 11 7 11S13 10.1 13 9"/></g></svg>
<div class="t" style="left:320.3px;top:308.64px">Customer</div>
<svg style="left:981px;top:305.5px" width="17" height="17" viewBox="0 0 17 17"><circle cx="8.5" cy="8.5" r="7.3" fill="none" stroke="#22b35e" stroke-width="1.7"/><path d="M5 9L7.5 11.2L12.2 6.4" fill="none" stroke="#22b35e" stroke-width="1.6"/></svg>
<svg style="left:1081.8px;top:305.5px" width="17" height="17" viewBox="0 0 17 17"><circle cx="8.5" cy="8.5" r="7.6" fill="none" stroke="#8e979d" stroke-width="1.75"/><path d="M5.7 5.7L11.3 11.3M11.3 5.7L5.7 11.3" stroke="#8e979d" stroke-width="1.6"/></svg>
<svg style="left:1148px;top:306.5px" width="15.5" height="15.5" viewBox="0 0 15.5 15.5"><rect x="0.6" y="0.6" width="14.3" height="14.3" fill="#f3f6f9" stroke="#8e959a" stroke-width="1.1"/><g fill="none" stroke="#4a7fc4" stroke-width="1.1"><rect x="3" y="3" width="3.5" height="4.5" rx="1"/><rect x="8.5" y="3" width="4" height="2.8" rx="1.2"/><rect x="3" y="9.5" width="3.5" height="3" rx="1.2"/><rect x="8.5" y="7.8" width="4" height="4.7" rx="1"/></g></svg>
<div class="t" style="left:1169.5px;top:308.64px;color:#888;letter-spacing:0.123px">Using default dashboard</div>
<div class="t" style="left:1395.9px;top:308.64px;color:#2d2d2d">Unchanged</div>
<div class="a" style="left:287px;top:327.5px;width:1252px;height:1px;background:#f0f0f0"></div>
<svg style="left:299.5px;top:334.5px" width="14" height="15" viewBox="0 0 14 15"><g fill="none" stroke="#4a7fc4" stroke-width="1.25"><ellipse cx="7" cy="2.6" rx="6" ry="2"/><path d="M1 2.6V12.3C1 13.4 3.7 14.3 7 14.3S13 13.4 13 12.3V2.6"/><path d="M1 5.8C1 6.9 3.7 7.8 7 7.8S13 6.9 13 5.8M1 9C1 10.1 3.7 11 7 11S13 10.1 13 9"/></g></svg>
<div class="t" style="left:320.3px;top:336.64px">Queue</div>
<svg style="left:981px;top:333.5px" width="17" height="17" viewBox="0 0 17 17"><circle cx="8.5" cy="8.5" r="7.6" fill="none" stroke="#8e979d" stroke-width="1.75"/><path d="M5.7 5.7L11.3 11.3M11.3 5.7L5.7 11.3" stroke="#8e979d" stroke-width="1.6"/></svg>
<svg style="left:1081.8px;top:333.5px" width="17" height="17" viewBox="0 0 17 17"><circle cx="8.5" cy="8.5" r="7.3" fill="none" stroke="#22b35e" stroke-width="1.7"/><path d="M5 9L7.5 11.2L12.2 6.4" fill="none" stroke="#22b35e" stroke-width="1.6"/></svg>
<svg style="left:1148px;top:334.5px" width="15.5" height="15.5" viewBox="0 0 15.5 15.5"><rect x="0.6" y="0.6" width="14.3" height="14.3" fill="#f3f6f9" stroke="#8e959a" stroke-width="1.1"/><g fill="none" stroke="#4a7fc4" stroke-width="1.1"><rect x="3" y="3" width="3.5" height="4.5" rx="1"/><rect x="8.5" y="3" width="4" height="2.8" rx="1.2"/><rect x="3" y="9.5" width="3.5" height="3" rx="1.2"/><rect x="8.5" y="7.8" width="4" height="4.7" rx="1"/></g></svg>
<div class="t" style="left:1169.5px;top:336.64px;color:#888;letter-spacing:0.123px">Using default dashboard</div>
<div class="t" style="left:1395.9px;top:336.64px;color:#2d2d2d">Unchanged</div>
<div class="a" style="left:287px;top:355.5px;width:1252px;height:1px;background:#f0f0f0"></div>
<svg style="left:299.5px;top:362.5px" width="14" height="15" viewBox="0 0 14 15"><g fill="none" stroke="#4a7fc4" stroke-width="1.25"><ellipse cx="7" cy="2.6" rx="6" ry="2"/><path d="M1 2.6V12.3C1 13.4 3.7 14.3 7 14.3S13 13.4 13 12.3V2.6"/><path d="M1 5.8C1 6.9 3.7 7.8 7 7.8S13 6.9 13 5.8M1 9C1 10.1 3.7 11 7 11S13 10.1 13 9"/></g></svg>
<div class="t" style="left:320.3px;top:364.64px;letter-spacing:0.192px">Transactional</div>
<svg style="left:981px;top:361.5px" width="17" height="17" viewBox="0 0 17 17"><circle cx="8.5" cy="8.5" r="7.6" fill="none" stroke="#8e979d" stroke-width="1.75"/><path d="M5.7 5.7L11.3 11.3M11.3 5.7L5.7 11.3" stroke="#8e979d" stroke-width="1.6"/></svg>
<svg style="left:1081.8px;top:361.5px" width="17" height="17" viewBox="0 0 17 17"><circle cx="8.5" cy="8.5" r="7.6" fill="none" stroke="#8e979d" stroke-width="1.75"/><path d="M5.7 5.7L11.3 11.3M11.3 5.7L5.7 11.3" stroke="#8e979d" stroke-width="1.6"/></svg>
<svg style="left:1148px;top:362.5px" width="15.5" height="15.5" viewBox="0 0 15.5 15.5"><rect x="0.6" y="0.6" width="14.3" height="14.3" fill="#f3f6f9" stroke="#8e959a" stroke-width="1.1"/><g fill="none" stroke="#4a7fc4" stroke-width="1.1"><rect x="3" y="3" width="3.5" height="4.5" rx="1"/><rect x="8.5" y="3" width="4" height="2.8" rx="1.2"/><rect x="3" y="9.5" width="3.5" height="3" rx="1.2"/><rect x="8.5" y="7.8" width="4" height="4.7" rx="1"/></g></svg>
<div class="t" style="left:1169.5px;top:364.64px;color:#888;letter-spacing:0.123px">Using default dashboard</div>
<div class="t" style="left:1395.9px;top:364.64px;color:#2d2d2d">Unchanged</div>
<div class="a" style="left:287px;top:383.5px;width:1252px;height:1px;background:#f0f0f0"></div>

<!-- separator -->
<div class="a" style="left:281px;top:410px;width:1264px;height:1.5px;background:#ededed"></div>

<!-- details tabs -->
<div class="a" style="left:281px;top:423px;width:160px;height:43px;background:#ececec"></div>
<div class="a" style="left:441px;top:415px;width:1px;height:676px;background:#ececec"></div>
<div class="t" style="left:301.4px;top:437.3px;font-size:14px;color:#3c4f5a;-webkit-text-stroke:0.25px #3c4f5a;letter-spacing:-0.116px">Details</div>
<div class="t" style="left:301.4px;top:480.5px;font-size:14px;color:#4f6470;letter-spacing:-0.096px">Metadata</div>
<div class="t" style="left:301.4px;top:523.8px;font-size:14px;color:#4f6470;letter-spacing:-0.297px">Training Sets</div>

<!-- form scrollbar -->
<div class="a" style="left:1519.5px;top:459px;width:8.5px;height:617px;background:#f7f7f7"></div>
<div class="a" style="left:1519.5px;top:459px;width:8.5px;height:366px;background:#ececec"></div>

<div class="t" style="left:452.3px;top:432.6px;font-size:15px;color:#44565f;letter-spacing:-0.066px">Selected Audience Definition - Details</div>
<div class="t" style="left:460.6px;top:467.14px;color:#343434;letter-spacing:-0.086px">Name:</div>
<div class="a" style="left:677.3px;top:458.3px;width:348.5px;height:28.2px;border:1.2px solid #d8d8d8;border-radius:4px;background:#fff"></div>
<div class="t" style="left:683.7px;top:466.84px;color:#2d2d2d">Customer</div>
<div class="t" style="left:460.6px;top:497.74px;color:#343434;letter-spacing:0.104px">Description:</div>
<div class="a" style="left:677.3px;top:488.6px;width:348.5px;height:49.1px;border:1.2px solid #d8d8d8;border-radius:4px;background:#fff"></div>
<div class="t" style="left:460.6px;top:548.54px;color:#343434;letter-spacing:0.119px">Default audience definition:</div>
<svg style="left:681px;top:546.8px" width="14.5" height="14.5" viewBox="0 0 14.5 14.5"><rect x="0" y="0" width="14.5" height="14.5" rx="2" fill="#0f7ad6"/><path d="M3.5 7.5L6.2 10.2L11.2 4.5" fill="none" stroke="#fff" stroke-width="1.7"/></svg>
<div class="t" style="left:1031.1px;top:548.54px;color:#858585;letter-spacing:0.129px">Specifies whether this is a default audience definition</div>
<div class="t" style="left:460.6px;top:578.84px;color:#343434;letter-spacing:0.034px">Resolution level:</div>
<div class="a" style="left:677.3px;top:572.3px;width:348.5px;height:23.7px;border:1.2px solid #d8d8d8;border-radius:4px;background:#fff"></div>
<div class="t" style="left:685.3px;top:578.84px;color:#4b5d66">Customer</div>
<svg style="left:1008px;top:580.3px" width="10.5" height="6.5" viewBox="0 0 10.5 6.5"><path d="M0.8 0.8L5.25 5.3L9.7 0.8" fill="none" stroke="#56676f" stroke-width="1.6"/></svg>
<div class="t" style="left:1031.1px;top:578.84px;color:#858585;letter-spacing:0.001px">Defines table from and key level at which data retrieved during audience instance execu…</div>
<div class="t" style="left:460.6px;top:609.54px;color:#343434;letter-spacing:-0.118px">Wiki Page:</div>
<svg style="left:683px;top:608.5px" width="16" height="13" viewBox="0 0 16 13"><path d="M0.7 0.7H7.6V11H0.7Z M8.4 0.7H15.3V11H8.4Z" fill="#f4f8fc" stroke="#3b8ad6" stroke-width="1.3" stroke-linejoin="round"/><path d="M2.5 3.2H5.8M2.5 5.2H5.8M2.5 7.2H5.8M2.5 9.2H5.8M10.2 3.2H13.5M10.2 5.2H13.5M10.2 7.2H13.5M10.2 9.2H13.5" stroke="#8a8a8a" stroke-width="0.55"/><path d="M6.8 11.2L8 12.5L9.2 11.2" fill="#3b8ad6" stroke="#3b8ad6" stroke-width="0.8"/></svg>
<div class="t" style="left:705.5px;top:609.54px;color:#2d2d2d">Foo</div>
<div class="t" style="left:1031.1px;top:609.54px;color:#858585;letter-spacing:0.091px">Associate a wiki page to give users some background on this audience definition</div>
<div class="t" style="left:460.6px;top:639.64px;color:#343434;letter-spacing:-0.020px">Linked nodes:</div>
<svg style="left:682.5px;top:638px" width="17" height="15.5" viewBox="0 0 17 15.5"><g fill="none" stroke="#7b7b7b" stroke-width="1.3"><rect x="3.5" y="0.7" width="10" height="3"/><path d="M8.5 3.7V7.5M2.3 12V7.5H14.7V12M8.5 7.5V12"/><circle cx="2.3" cy="13.2" r="1.5"/><circle cx="8.5" cy="13.2" r="1.5"/><circle cx="14.7" cy="13.2" r="1.5"/></g></svg>
<div class="t" style="left:705.5px;top:639.64px;color:#a0a0a0;letter-spacing:-0.099px">Choose Nodes</div>
<div class="t" style="left:1031.1px;top:639.64px;color:#858585;letter-spacing:0.059px">Restricts audience definition usage to one or more nodes from the current organization…</div>
<div class="t" style="left:460.6px;top:670.64px;color:#343434;letter-spacing:0.136px">Insights dashboard:</div>
<svg style="left:685px;top:668px" width="15" height="16" viewBox="0 0 15 16"><rect x="0.6" y="0.6" width="13.8" height="14.8" fill="#f5f7f9" stroke="#c2c6c9" stroke-width="1.1"/><g fill="none" stroke="#a9c1e0" stroke-width="1.1"><rect x="3" y="3" width="3.3" height="4.8" rx="1"/><rect x="8.3" y="3" width="3.8" height="2.8" rx="1.2"/><rect x="3" y="9.8" width="3.3" height="3" rx="1.2"/><rect x="8.3" y="8" width="3.8" height="4.8" rx="1"/></g></svg>
<div class="t" style="left:706.8px;top:670.64px;color:#a0a0a0;letter-spacing:0.054px">Using default dashboard. Click to change.</div>
<div class="t" style="left:1031.1px;top:670.64px;color:#858585;letter-spacing:0.062px">Dashboard to use when viewing Insights for Audiences built using this Audience Definit…</div>
<div class="t" style="left:460.6px;top:702.14px;color:#343434;letter-spacing:0.074px">Global contact rule:</div>
<svg style="left:682.5px;top:703px" width="17" height="10.5" viewBox="0 0 17 10.5"><rect x="5" y="0.6" width="11.5" height="5.5" rx="1.2" fill="#e6e6e6" stroke="#d0d0d0" stroke-width="0.8"/><rect x="3" y="2.3" width="11.5" height="5.5" rx="1.2" fill="#dbe8f4" stroke="#b9cde2" stroke-width="0.8"/><rect x="0.7" y="4.3" width="11.8" height="5.6" rx="1.2" fill="#fde9ef" stroke="#ee86a6" stroke-width="1"/><path d="M2.5 7H10.5" stroke="#ee86a6" stroke-width="0.8"/></svg>
<div class="t" style="left:705.5px;top:702.14px;color:#a0a0a0">Selection Rule</div>
<div class="t" style="left:1031.1px;top:702.14px;color:#858585;letter-spacing:0.074px">Filter always applied when audience based on current definition executed</div>
<div class="t" style="left:460.6px;top:732.34px;color:#343434;letter-spacing:0.052px">Audit audience target IDs:</div>
<div class="a" style="left:681px;top:731px;width:14.5px;height:14.5px;border:1.1px solid #d3d8dd;border-radius:2px;background:#fff"></div>
<div class="t" style="left:1031.1px;top:732.34px;color:#858585;letter-spacing:0.007px">If checked, temporary tables generated during audience execution will be retained for a…</div>
<div class="t" style="left:460.6px;top:762.84px;color:#343434;letter-spacing:-0.000px">Ensure all blocks execute separately:</div>
<div class="a" style="left:681px;top:761.3px;width:14.5px;height:14.5px;border:1.1px solid #d3d8dd;border-radius:2px;background:#fff"></div>
<div class="t" style="left:1031.1px;top:762.84px;color:#858585;letter-spacing:0.018px">If checked, all filter blocks in audiences will be executed independently, using separate t…</div>
<div class="t" style="left:460.6px;top:793.14px;color:#343434;letter-spacing:0.134px">Run fulfillment queries in test mode:</div>
<svg style="left:681px;top:791.7px" width="14.5" height="14.5" viewBox="0 0 14.5 14.5"><rect x="0" y="0" width="14.5" height="14.5" rx="2" fill="#0f7ad6"/><path d="M3.5 7.5L6.2 10.2L11.2 4.5" fill="none" stroke="#fff" stroke-width="1.7"/></svg>
<div class="t" style="left:1031.1px;top:793.14px;color:#858585;letter-spacing:0.101px">If checked, queries that select attributes for fulfillment content will be executed in test…</div>
<div class="t" style="left:456.7px;top:826.10px;font-size:15px;color:#4a5c66;letter-spacing:-0.229px">Queue Listener</div>
<div class="t" style="left:460.6px;top:856.44px;color:#343434;letter-spacing:0.033px">Use for queue listeners:</div>
<div class="a" style="left:681px;top:854.5px;width:14.5px;height:14.5px;border:1.1px solid #d3d8dd;border-radius:2px;background:#fff"></div>
<div class="t" style="left:1031.1px;top:856.44px;color:#858585;letter-spacing:0.109px">Specifies whether this audience definition is to be used to support queue listeners</div>
<div class="t" style="left:456.7px;top:889.20px;font-size:15px;color:#4a5c66;letter-spacing:-0.167px">Offer History</div>
<div class="t" style="left:460.6px;top:919.64px;color:#343434;letter-spacing:0.105px">Offer history table name:</div>
<div class="a" style="left:677.3px;top:911.3px;width:348.5px;height:27.5px;border:1.2px solid #d8d8d8;border-radius:4px;background:#fff"></div>
<div class="t" style="left:683.7px;top:919.64px;color:#2d2d2d;letter-spacing:0.209px">OfferHistory</div>
<div class="t" style="left:1031.1px;top:919.84px;color:#858585;letter-spacing:0.147px">Table in which details of offer contactees stored permanently</div>
<div class="t" style="left:460.6px;top:949.64px;color:#343434;letter-spacing:0.114px">Offer history meta table name:</div>
<div class="a" style="left:677.3px;top:941.7px;width:348.5px;height:27.7px;border:1.2px solid #d8d8d8;border-radius:4px;background:#fff"></div>
<div class="t" style="left:683.7px;top:949.64px;color:#2d2d2d;letter-spacing:0.182px">OfferHistoryMeta</div>
<div class="t" style="left:1031.1px;top:949.94px;color:#858585;letter-spacing:0.114px">Table in which cells and assigned metadata values written permanently</div>
<div class="t" style="left:460.6px;top:980.44px;color:#343434;letter-spacing:0.197px">Offer history attributes:</div>
<div class="a" style="left:677.3px;top:971.9px;width:348.5px;height:100.4px;border:1.2px solid #d8d8d8;border-radius:4px;background:#fff"></div>
<div class="t" style="left:1031.1px;top:977.54px;color:#858585;letter-spacing:0.149px">Extra attributes added to offer history in addition to compatible keys</div>
<div class="t" style="left:684.7px;top:982.54px;color:#2d2d2d;letter-spacing:-0.050px">CustomerKey</div>
<div class="t" style="left:684.7px;top:1010.54px;color:#2d2d2d">First Name</div>
<div class="t" style="left:684.7px;top:1038.54px;color:#2d2d2d;letter-spacing:-0.021px">Subscriber Key</div>
<div class="a" style="left:677.3px;top:1073.8px;width:348.5px;height:3.2px;background:#dfeaf6;border-top:1px solid #a9c7e8"></div>
<div class="a" style="left:442px;top:1077px;width:1103px;height:14px;background:#fff"></div>


</body></html>
